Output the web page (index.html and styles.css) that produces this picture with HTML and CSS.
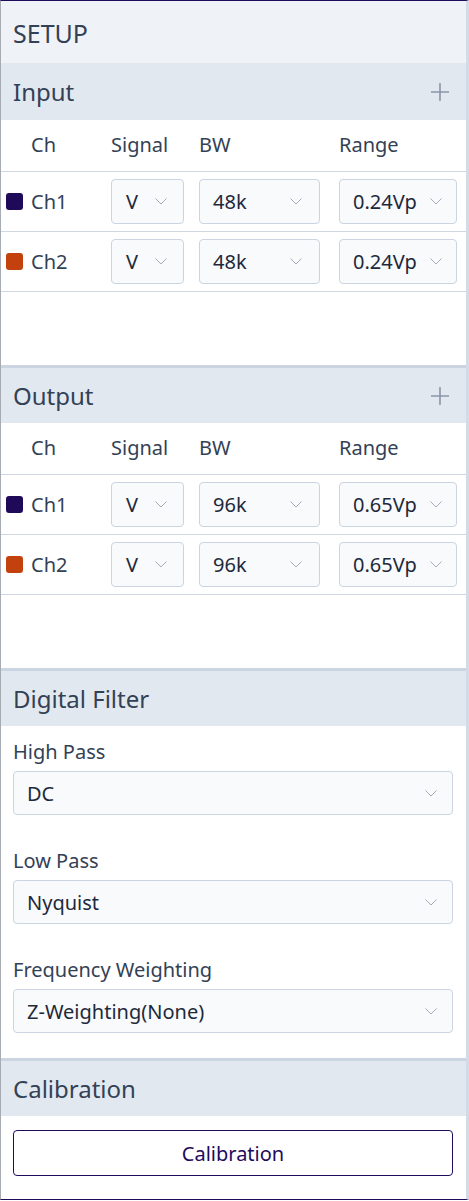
FILE: index.html
```html
<!DOCTYPE html>
<html lang="en">
<head>
<meta charset="utf-8">
<title>Setup</title>
<link rel="stylesheet" href="styles.css">
</head>
<body>
<div class="panel">
  <div class="title">SETUP</div>

  <section class="sec sec-first">
    <div class="sec-head">
      <span>Input</span>
      <svg class="plus" width="18" height="18" viewBox="0 0 18 18"><path d="M9 0V18M0 9H18" stroke="#8b95a7" stroke-width="1.6" fill="none"/></svg>
    </div>
    <div class="ch-table">
      <div class="ch-row ch-head"><span class="c-ch">Ch</span><span>Signal</span><span>BW</span><span>Range</span></div>
      <div class="ch-row">
        <div class="ch-name"><i class="sw sw1"></i>Ch1</div>
        <div class="sel sel-sig"><span>V</span><svg class="chev" width="12" height="7" viewBox="0 0 12 7"><path d="M0.5 0.5L6 6L11.5 0.5" stroke="#a3adbd" stroke-width="1" fill="none"/></svg></div>
        <div class="sel sel-bw"><span>48k</span><svg class="chev" width="12" height="7" viewBox="0 0 12 7"><path d="M0.5 0.5L6 6L11.5 0.5" stroke="#a3adbd" stroke-width="1" fill="none"/></svg></div>
        <div class="sel sel-range"><span>0.24Vp</span><svg class="chev" width="12" height="7" viewBox="0 0 12 7"><path d="M0.5 0.5L6 6L11.5 0.5" stroke="#a3adbd" stroke-width="1" fill="none"/></svg></div>
      </div>
      <div class="ch-row">
        <div class="ch-name"><i class="sw sw2"></i>Ch2</div>
        <div class="sel sel-sig"><span>V</span><svg class="chev" width="12" height="7" viewBox="0 0 12 7"><path d="M0.5 0.5L6 6L11.5 0.5" stroke="#a3adbd" stroke-width="1" fill="none"/></svg></div>
        <div class="sel sel-bw"><span>48k</span><svg class="chev" width="12" height="7" viewBox="0 0 12 7"><path d="M0.5 0.5L6 6L11.5 0.5" stroke="#a3adbd" stroke-width="1" fill="none"/></svg></div>
        <div class="sel sel-range"><span>0.24Vp</span><svg class="chev" width="12" height="7" viewBox="0 0 12 7"><path d="M0.5 0.5L6 6L11.5 0.5" stroke="#a3adbd" stroke-width="1" fill="none"/></svg></div>
      </div>
    </div>
  </section>

  <section class="sec">
    <div class="sec-head">
      <span>Output</span>
      <svg class="plus" width="18" height="18" viewBox="0 0 18 18"><path d="M9 0V18M0 9H18" stroke="#8b95a7" stroke-width="1.6" fill="none"/></svg>
    </div>
    <div class="ch-table">
      <div class="ch-row ch-head"><span class="c-ch">Ch</span><span>Signal</span><span>BW</span><span>Range</span></div>
      <div class="ch-row">
        <div class="ch-name"><i class="sw sw1"></i>Ch1</div>
        <div class="sel sel-sig"><span>V</span><svg class="chev" width="12" height="7" viewBox="0 0 12 7"><path d="M0.5 0.5L6 6L11.5 0.5" stroke="#a3adbd" stroke-width="1" fill="none"/></svg></div>
        <div class="sel sel-bw"><span>96k</span><svg class="chev" width="12" height="7" viewBox="0 0 12 7"><path d="M0.5 0.5L6 6L11.5 0.5" stroke="#a3adbd" stroke-width="1" fill="none"/></svg></div>
        <div class="sel sel-range"><span>0.65Vp</span><svg class="chev" width="12" height="7" viewBox="0 0 12 7"><path d="M0.5 0.5L6 6L11.5 0.5" stroke="#a3adbd" stroke-width="1" fill="none"/></svg></div>
      </div>
      <div class="ch-row">
        <div class="ch-name"><i class="sw sw2"></i>Ch2</div>
        <div class="sel sel-sig"><span>V</span><svg class="chev" width="12" height="7" viewBox="0 0 12 7"><path d="M0.5 0.5L6 6L11.5 0.5" stroke="#a3adbd" stroke-width="1" fill="none"/></svg></div>
        <div class="sel sel-bw"><span>96k</span><svg class="chev" width="12" height="7" viewBox="0 0 12 7"><path d="M0.5 0.5L6 6L11.5 0.5" stroke="#a3adbd" stroke-width="1" fill="none"/></svg></div>
        <div class="sel sel-range"><span>0.65Vp</span><svg class="chev" width="12" height="7" viewBox="0 0 12 7"><path d="M0.5 0.5L6 6L11.5 0.5" stroke="#a3adbd" stroke-width="1" fill="none"/></svg></div>
      </div>
    </div>
  </section>

  <section class="sec sec-filter">
    <div class="sec-head"><span>Digital Filter</span></div>
    <div class="filter-body">
      <div class="field">
        <div class="label">High Pass</div>
        <div class="sel sel-full"><span>DC</span><svg class="chev" width="12" height="7" viewBox="0 0 12 7"><path d="M0.5 0.5L6 6L11.5 0.5" stroke="#a3adbd" stroke-width="1" fill="none"/></svg></div>
      </div>
      <div class="field">
        <div class="label">Low Pass</div>
        <div class="sel sel-full"><span>Nyquist</span><svg class="chev" width="12" height="7" viewBox="0 0 12 7"><path d="M0.5 0.5L6 6L11.5 0.5" stroke="#a3adbd" stroke-width="1" fill="none"/></svg></div>
      </div>
      <div class="field">
        <div class="label">Frequency Weighting</div>
        <div class="sel sel-full"><span>Z-Weighting(None)</span><svg class="chev" width="12" height="7" viewBox="0 0 12 7"><path d="M0.5 0.5L6 6L11.5 0.5" stroke="#a3adbd" stroke-width="1" fill="none"/></svg></div>
      </div>
    </div>
  </section>

  <section class="sec sec-cal">
    <div class="sec-head"><span>Calibration</span></div>
    <div class="cal-body">
      <button class="cal-btn" type="button">Calibration</button>
    </div>
  </section>
</div>
</body>
</html>
```

FILE: styles.css
```css
* { box-sizing: border-box; }

html, body {
  margin: 0;
  padding: 0;
  background: #ffffff;
}

body {
  font-family: "Noto Sans", "Open Sans", sans-serif;
  color: #334155;
}

.panel {
  width: 469px;
  height: 1200px;
  border-top: 1px solid #1e0b5c;
  border-bottom: 1px solid #1e0b5c;
  border-left: 1px solid #a7abb2;
  border-right: 3px solid #d3dbe6;
  background: #ffffff;
  display: flex;
  flex-direction: column;
  overflow: hidden;
}

.title {
  height: 62px;
  flex: none;
  background: #eff3f8;
  padding-left: 12px;
  display: flex;
  align-items: center;
  font-size: 25px;
  line-height: 1;
  color: #334155;
  padding-top: 2px;
}

.sec {
  border-top: 3px solid #cbd5e1;
  flex: none;
}

.sec-first {
  border-top: none;
}

.sec-head {
  height: 55px;
  background: #e2e8f0;
  display: flex;
  align-items: center;
  justify-content: space-between;
  padding: 0 17px 0 12px;
  font-size: 24px;
  color: #334155;
}

.sec-first .sec-head {
  height: 57px;
}

.plus {
  display: block;
}

.ch-table {
  padding-bottom: 73px;
}

.ch-row {
  display: grid;
  grid-template-columns: 105px 88px 140px 118px;
  align-items: center;
  padding: 7px 0 7px 5px;
  border-bottom: 1px solid #cfd7e2;
  font-size: 20px;
  color: #334155;
}

.ch-head {
  height: 52px;
  padding-top: 0;
  padding-bottom: 2px;
}

.c-ch {
  padding-left: 25px;
}

.ch-name {
  display: flex;
  align-items: center;
  gap: 8px;
}

.sw {
  display: block;
  width: 17px;
  height: 17px;
  border-radius: 3px;
}

.sw1 { background: #1f0a5a; }
.sw2 { background: #c2410c; }

.sel {
  height: 45px;
  border: 1px solid #cbd5e1;
  border-radius: 4px;
  background: #f8fafc;
  display: flex;
  align-items: center;
  justify-content: space-between;
  padding: 0 15px 0 14px;
  font-size: 20px;
  color: #1e293b;
  white-space: nowrap;
}

.sel .chev {
  flex: none;
  display: block;
}

.sel-sig { width: 73px; padding-right: 16px; }
.sel-bw { width: 121px; padding-left: 13px; padding-right: 17px; }
.sel-range { width: 118px; padding-left: 13px; padding-right: 14px; }

.filter-body {
  padding: 12px 12px 25px 12px;
  display: flex;
  flex-direction: column;
  gap: 32px;
}

.field {
  display: flex;
  flex-direction: column;
  gap: 5px;
}

.label {
  font-size: 20px;
  line-height: 28px;
  color: #334155;
}

.sel-full {
  height: 44px;
  width: 440px;
  padding: 0 15px 0 13px;
}

.cal-body {
  padding: 14px 12px 0 12px;
}

.cal-btn {
  width: 440px;
  height: 46px;
  border: 1px solid #1e0b5c;
  border-radius: 4px;
  background: #ffffff;
  font-family: "Noto Sans", "Open Sans", sans-serif;
  font-size: 20px;
  color: #1e0b5c;
  cursor: pointer;
  padding: 0;
}
```
